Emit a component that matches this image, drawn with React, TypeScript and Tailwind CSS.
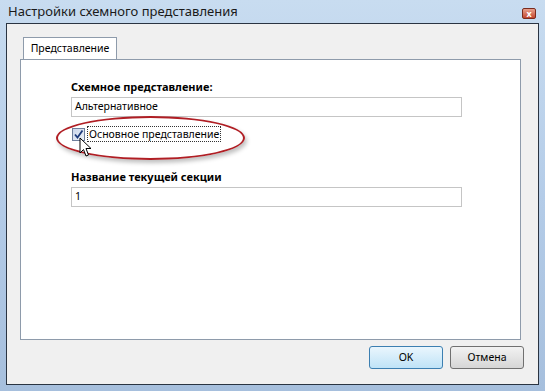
import React from 'react';

const font = { fontFamily: '"Noto Sans", "Open Sans", sans-serif' };

function Cursor() {
    return (
        <svg width="14" height="21" viewBox="0 0 14 21" className="absolute left-[79px] top-[137px]">
            <path d="M1 1 L1 16 L4.5 12.5 L7 19 L9.5 18 L7 11.5 L12 11.5 Z" fill="#fff" stroke="#000" strokeWidth="1" strokeLinejoin="round" />
        </svg>
    );
}

export default function App() {
    return (
        <div className="relative h-[391px] w-[545px] overflow-hidden bg-gradient-to-b from-[#c8dcf0] via-[#b4cce8] to-[#a6bfdd] text-[#000]" style={font}>
            {/* title bar */}
            <div className="flex h-[23px] items-center justify-between pl-[8px] pr-[9px]">
                <span className="text-[13px] leading-none text-[#1a1a1a]">Настройки схемного представления</span>
                <div className="mt-[3px] flex h-[11px] w-[14px] items-center justify-center rounded-[2px] border border-[#7a2b1d] bg-gradient-to-b from-[#e8a08c] to-[#c2452d]">
                    <span className="text-[9px] font-bold leading-none text-white">x</span>
                </div>
            </div>

            {/* client area */}
            <div className="mx-[6px] h-[362px] border border-[#2a3442] bg-[#f0f0f0]">
                <div className="flex flex-col pl-[13px] pr-[16px] pt-[13px]">
                    <div className="flex pl-[3px]">
                        <div className="-mb-px flex h-[23px] w-[94px] items-center justify-center border border-b-0 border-[#8e9bab] bg-white text-[10.5px]">
                            Представление
                        </div>
                    </div>
                    <div className="flex h-[281px] w-[501px] flex-col border border-[#8e9bab] bg-white pl-[50px] pt-[20px]">
                        <div className="text-[11px] font-bold leading-[14px]">Схемное представление:</div>
                        <div className="mt-[3px] flex h-[20px] w-[391px] items-center border border-[#c5c5c5] px-[3px] text-[10.5px]">Альтернативное</div>
                        <div className="mt-[9px] flex items-center gap-[2px] pl-[1px]">
                            <div className="flex h-[13px] w-[13px] items-center justify-center border border-[#6e7f9c] bg-gradient-to-br from-[#c9d5ea] to-[#eef2f9]">
                                <svg width="11" height="11" viewBox="0 0 11 11"><path d="M2 5.5 L4.5 8.5 L9.5 1.5" fill="none" stroke="#1d3b7c" strokeWidth="1.8" /></svg>
                            </div>
                            <span className="border border-dotted border-[#333] px-[1px] text-[10.5px] leading-[14px]">Основное представление</span>
                        </div>
                        <div className="mt-[28px] text-[11px] font-bold leading-[14px]">Название текущей секции</div>
                        <div className="mt-[3px] flex h-[20px] w-[391px] items-center border border-[#c5c5c5] px-[3px] text-[10.5px]">1</div>
                    </div>
                    <div className="mt-[6px] flex justify-end gap-[7px] pr-[-2px]">
                        <button className="h-[23px] w-[74px] rounded-[3px] border border-[#3c7fb1] bg-gradient-to-b from-[#eaf6fd] to-[#bfe3f7] text-[10.5px]">OK</button>
                        <button className="-mr-[2px] h-[23px] w-[74px] rounded-[3px] border border-[#707070] bg-gradient-to-b from-[#f2f2f2] to-[#d6d6d6] text-[10.5px]">Отмена</button>
                    </div>
                </div>
            </div>

            {/* highlight ellipse */}
            <div className="absolute left-[56px] top-[116px] h-[44px] w-[189px] rounded-[50%] border-[2px] border-[#b01e24] shadow-[2px_3px_4px_rgba(0,0,0,0.25)]" />
            <Cursor />
        </div>
    );
}
